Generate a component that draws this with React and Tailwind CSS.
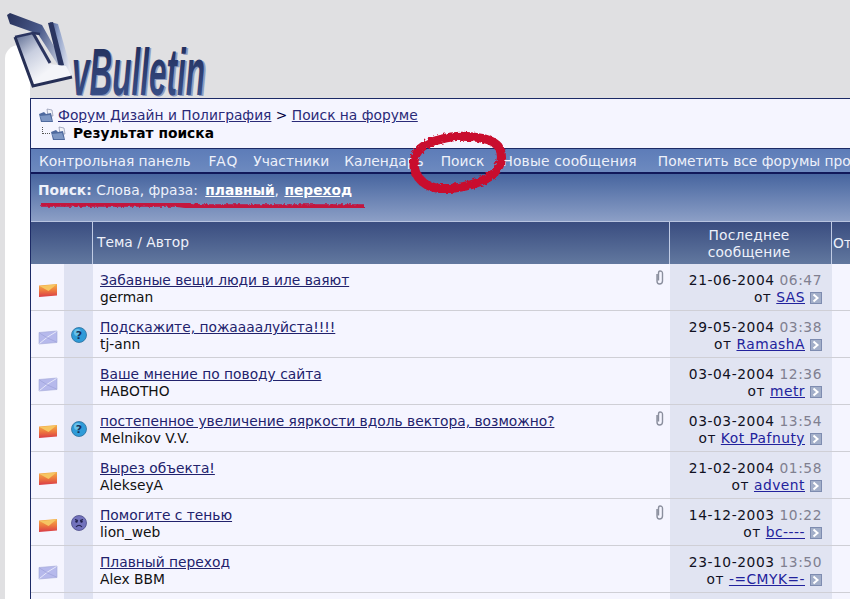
import React from "react";

const threads = [
  { title: "Забавные вещи люди в иле ваяют", author: "german", date: "21-06-2004", time: "06:47", by: "SAS", hot: true, clip: true },
  { title: "Подскажите, пожаааалуйста!!!!", author: "tj-ann", date: "29-05-2004", time: "03:38", by: "RamashA", mood: "question" },
  { title: "Ваше мнение по поводу сайта", author: "HABOTHO", date: "03-04-2004", time: "12:36", by: "metr" },
  { title: "постепенное увеличение яяркости вдоль вектора, возможно?", author: "Melnikov V.V.", date: "03-03-2004", time: "13:54", by: "Kot Pafnuty", hot: true, clip: true, mood: "question" },
  { title: "Вырез объекта!", author: "AlekseyA", date: "21-02-2004", time: "01:58", by: "advent", hot: true },
  { title: "Помогите с тенью", author: "lion_web", date: "14-12-2003", time: "10:22", by: "bc----", hot: true, clip: true, mood: "sad" },
  { title: "Плавный переход", author: "Alex BBM", date: "23-10-2003", time: "13:50", by: "-=CMYK=-" },
];

const navItems = [
  { label: "Контрольная панель", cls: "mr-[18px]" },
  { label: "FAQ", cls: "mr-[15px] tracking-[1px]" },
  { label: "Участники", cls: "mr-[15px]" },
  { label: "Календарь", cls: "mr-[17px]" },
  { label: "Поиск", cls: "mr-[18px]" },
  { label: "Новые сообщения", cls: "mr-[21px] tracking-[0.2px]" },
  { label: "Пометить все форумы прочитанными", cls: "" },
];

const Logo = () => (
  <svg className="absolute left-0 top-0" width="210" height="98" viewBox="0 0 210 98">
    <defs>
      <linearGradient id="wing" x1="0" y1="0" x2="1" y2="0.3">
        <stop offset="0" stopColor="#4a5c90" />
        <stop offset="0.4" stopColor="#8ea0c8" />
        <stop offset="1" stopColor="#e8e9f0" />
      </linearGradient>
      <linearGradient id="inner" x1="0" y1="0" x2="0.8" y2="1">
        <stop offset="0" stopColor="#59688f" />
        <stop offset="0.35" stopColor="#c8cedf" />
        <stop offset="0.7" stopColor="#f4f5f9" />
      </linearGradient>
      <linearGradient id="band" x1="0" y1="0" x2="1" y2="0.4">
        <stop offset="0" stopColor="#27315a" />
        <stop offset="0.6" stopColor="#4a5a8a" />
        <stop offset="1" stopColor="#aab4cc" />
      </linearGradient>
      <linearGradient id="word" x1="0" y1="0" x2="0" y2="1">
        <stop offset="0" stopColor="#1f2a55" />
        <stop offset="1" stopColor="#3d5590" />
      </linearGradient>
    </defs>
    {/* top band */}
    <polygon points="7,15 10,13 42,25 65,66 60,68 38,34 10,24" fill="url(#band)" />
    {/* right wing */}
    <polygon points="50,22 58,24 73,76 64,66" fill="url(#wing)" />
    <polygon points="48,23 53,22 64,65 59,67" fill="#2a3560" />
    {/* body */}
    <polygon points="15,37 33,34 50,64 66,66 72,77 33,88" fill="url(#inner)" />
    <polyline points="15,37 33,33 40,34" fill="none" stroke="#2b3560" strokeWidth="2.5" />
    <polyline points="15,37 33,86 72,77" fill="none" stroke="#262f55" strokeWidth="3" />
    <polyline points="33,33 50,63" fill="none" stroke="#2b3560" strokeWidth="3" />
    <text x="73" y="96" fontFamily="'Liberation Sans', sans-serif" fontStyle="italic" fontWeight="700" fontSize="66" fill="#8f9cc0" textLength="134" lengthAdjust="spacingAndGlyphs">vBulletin</text>
    <text x="72" y="95" fontFamily="'Liberation Sans', sans-serif" fontStyle="italic" fontWeight="700" fontSize="66" fill="url(#word)" textLength="133" lengthAdjust="spacingAndGlyphs">vBulletin</text>
  </svg>
);

const Folder = () => (
  <svg width="16" height="15" viewBox="0 0 16 15">
    <polygon points="9,1 14,2 15,8 10,8" fill="#f2f3f8" stroke="#77809f" strokeWidth="0.6" />
    <polygon points="1,6 6,4 8,6 13,5 15,14 3,14" fill="#4f6a9f" />
    <polygon points="2,8 12,7 14,13 4,13" fill="#7e97c4" />
  </svg>
);

const Envelope = ({ hot }) => (
  <svg width="20" height="15" viewBox="0 0 19 15">
    <defs>
      <linearGradient id="hotEnv" x1="0" y1="0" x2="0" y2="1">
        <stop offset="0" stopColor="#f4b24a" />
        <stop offset="0.5" stopColor="#ee7a3e" />
        <stop offset="1" stopColor="#d93a48" />
      </linearGradient>
    </defs>
    {hot ? (
      <>
        <polygon points="0.5,2.5 18.5,1 18.5,12.5 0.5,14" fill="url(#hotEnv)" />
        <polyline points="1,3 10,8 18,1.5" fill="#f6c562" />
      </>
    ) : (
      <>
        <polygon points="0.5,2.5 18.5,1 18.5,12.5 0.5,14" fill="#b6b9ec" stroke="#a2a7d6" strokeWidth="0.6" />
        <polyline points="1,13.5 9,7 18,1.5" fill="none" stroke="#e6e8fa" strokeWidth="1" />
        <polyline points="1,3 9,8 18,12" fill="none" stroke="#9297d0" strokeWidth="0.5" />
      </>
    )}
  </svg>
);

const Mood = ({ type }) =>
  type === "question" ? (
    <svg width="16" height="16" viewBox="0 0 16 16">
      <circle cx="8" cy="8" r="7.5" fill="#2f9bd8" stroke="#2b6f9c" strokeWidth="0.8" />
      <circle cx="6.5" cy="5.5" r="3.5" fill="#7fd0f2" opacity="0.7" />
      <text x="8" y="12" textAnchor="middle" fontFamily="'DejaVu Sans', sans-serif" fontWeight="700" fontSize="11" fill="#14305c">?</text>
    </svg>
  ) : (
    <svg width="16" height="16" viewBox="0 0 16 16">
      <circle cx="8" cy="8" r="7.5" fill="#7272bc" stroke="#4a4a88" strokeWidth="0.8" />
      <circle cx="5.5" cy="6.5" r="1.2" fill="#1f1f4a" />
      <circle cx="10.5" cy="6.5" r="1.2" fill="#1f1f4a" />
      <path d="M4 4.5 L7 5.5 M12 4.5 L9 5.5 M5 12 Q8 8.5 11 12" fill="none" stroke="#1f1f4a" strokeWidth="1.1" />
    </svg>
  );

const Clip = () => (
  <svg width="9" height="15" viewBox="0 0 9 15">
    <path d="M2 4 V11 Q2 14 4.5 14 Q7.5 14 7.5 11 V3.5 Q7.5 1 5 1 Q3.5 1 3.5 3.5 V10.5" fill="none" stroke="#8b8f9e" strokeWidth="1.4" />
  </svg>
);

const GoLast = () => (
  <svg width="12" height="12" viewBox="0 0 12 12">
    <rect width="12" height="12" fill="#7e8cb0" />
    <rect x="1" y="1" width="10" height="10" fill="#a3afc9" />
    <polyline points="3.5,2.5 7.5,6 3.5,9.5" fill="none" stroke="#ffffff" strokeWidth="2" />
  </svg>
);

const Marker = () => (
  <svg className="absolute left-0 top-0" width="850" height="240" viewBox="0 0 850 240">
    <defs>
      <filter id="rough" x="-5%" y="-20%" width="110%" height="140%">
        <feTurbulence type="fractalNoise" baseFrequency="0.35" numOctaves="2" seed="4" />
        <feDisplacementMap in="SourceGraphic" scale="4" />
      </filter>
    </defs>
    <path
      d="M442 139 C458 134 490 136 498 146 C506 158 499 172 486 179 C468 188 440 192 427 185 C412 176 411 160 419 150 C425 143 434 141 442 139"
      fill="none"
      stroke="#c90f2d"
      strokeWidth="9"
      filter="url(#rough)"
    />
    <path d="M41 204 L175 204 L200 207 L290 207 L364 207" fill="none" stroke="#c4143c" strokeWidth="5.5" filter="url(#rough)" />
  </svg>
);

const App = () => {
  return (
    <div
      className="relative w-[850px] h-[599px] overflow-hidden bg-[#e0e0e2] text-[13.8px] leading-[17px]"
      style={{ fontFamily: "'DejaVu Sans', Verdana, sans-serif" }}
    >
      <div className="flex h-[98px] items-end pl-[5px]">
        <div className="h-[53px] w-[25px] rounded-tl-[14px] bg-white" />
      </div>
      <div className="ml-[5px] bg-white pl-[25px] h-[501px]">
        {/* Forum box */}
        <div className="w-[1000px] border border-[#1c2a66]">
          {/* Breadcrumb */}
          <div className="h-[49px] bg-[#f5f5ff] pl-[7px] pt-[8px]">
            <div className="flex items-center gap-[4px] h-[17px]">
              <Folder />
              <span>
                <a className="text-[#2a2a78] underline">Форум Дизайн и Полиграфия</a>
                <span className="text-[#000040]"> &gt; </span>
                <a className="text-[#2a2a78] underline">Поиск на форуме</a>
              </span>
            </div>
            <div className="flex items-center h-[18px] pl-[4px]">
              <span className="w-[8px] h-[7px] mb-[6px] border-l border-b border-dotted border-[#555555]" />
              <Folder />
              <span className="ml-[7px] font-bold text-black">Результат поиска</span>
            </div>
          </div>
          {/* Navbar */}
          <div className="flex h-[26px] items-center border-t border-b-2 border-t-[#1c2a66] border-b-[#10185a] bg-gradient-to-b from-[#5d7cb8] to-[#6d8abf] pl-[8px] pt-[2px] text-[#eef1fa]">
            {navItems.map((item) => (
              <span key={item.label} className={`whitespace-nowrap ${item.cls}`}>{item.label}</span>
            ))}
          </div>
          {/* Search summary */}
          <div className="h-[47px] bg-gradient-to-b from-[#47659f] to-[#8c9fc6] pl-[7px] pt-[8px] text-[#eef1fa]">
            <b>Поиск:</b> Слова, фраза:{" "}
            <b className="ml-[3px] underline text-white">плавный</b>, <b className="ml-[1px] underline text-white">переход</b>
          </div>
          {/* Table header */}
          <div className="grid grid-cols-[33px_29px_577px_162px_1fr] h-[43px] border-t border-[#b8c4e0] bg-gradient-to-b from-[#3a4d80] to-[#62789f] text-[#eef1fa]">
            <div />
            <div className="border-r border-[#c0cbe4]" />
            <div className="flex items-center border-r border-[#c0cbe4] pl-[4px] pb-[1px]">Тема / Автор</div>
            <div className="flex items-center justify-center border-r border-[#c0cbe4] pr-[3px] pt-[1px] text-center tracking-[0.2px]">
              Последнее<br />сообщение
            </div>
            <div className="flex items-center pl-[1px]">Ответов</div>
          </div>
          {/* Rows */}
          {threads.map((t) => (
            <div key={t.title} className="grid grid-cols-[33px_29px_577px_162px_1fr] h-[47px] border-b border-[#cfcfd6] bg-[#f5f5ff]">
              <div className="flex items-center justify-center pt-[7px]">
                <Envelope hot={t.hot} />
              </div>
              <div className="flex items-center justify-center bg-[#dfe2f2] pt-[2px]">
                {t.mood && <Mood type={t.mood} />}
              </div>
              <div className="relative pl-[7px] pt-[8px]">
                <a className="block text-[#22226c] underline">{t.title}</a>
                <div className="text-[#111111]">{t.author}</div>
                {t.clip && (
                  <span className="absolute right-[6px] top-[6px]">
                    <Clip />
                  </span>
                )}
              </div>
              <div className="bg-[#e1e4f2] pr-[10px] pt-[8px] text-right text-[#111122]">
                <div className="tracking-[0.55px]">
                  {t.date} <span className="text-[#808090]">{t.time}</span>
                </div>
                <div className="flex items-center justify-end gap-[5px] tracking-[0.5px]">
                  <span>
                    от <a className="text-[#22229c] underline">{t.by}</a>
                  </span>
                  <GoLast />
                </div>
              </div>
              <div />
            </div>
          ))}
          <div className="grid grid-cols-[33px_29px_577px_162px_1fr] h-[47px] bg-[#f5f5ff]">
            <div />
            <div className="bg-[#dfe2f2]" />
            <div />
            <div className="bg-[#e1e4f2]" />
            <div />
          </div>
        </div>
      </div>
      <Logo />
      <Marker />
    </div>
  );
};

export default App;
